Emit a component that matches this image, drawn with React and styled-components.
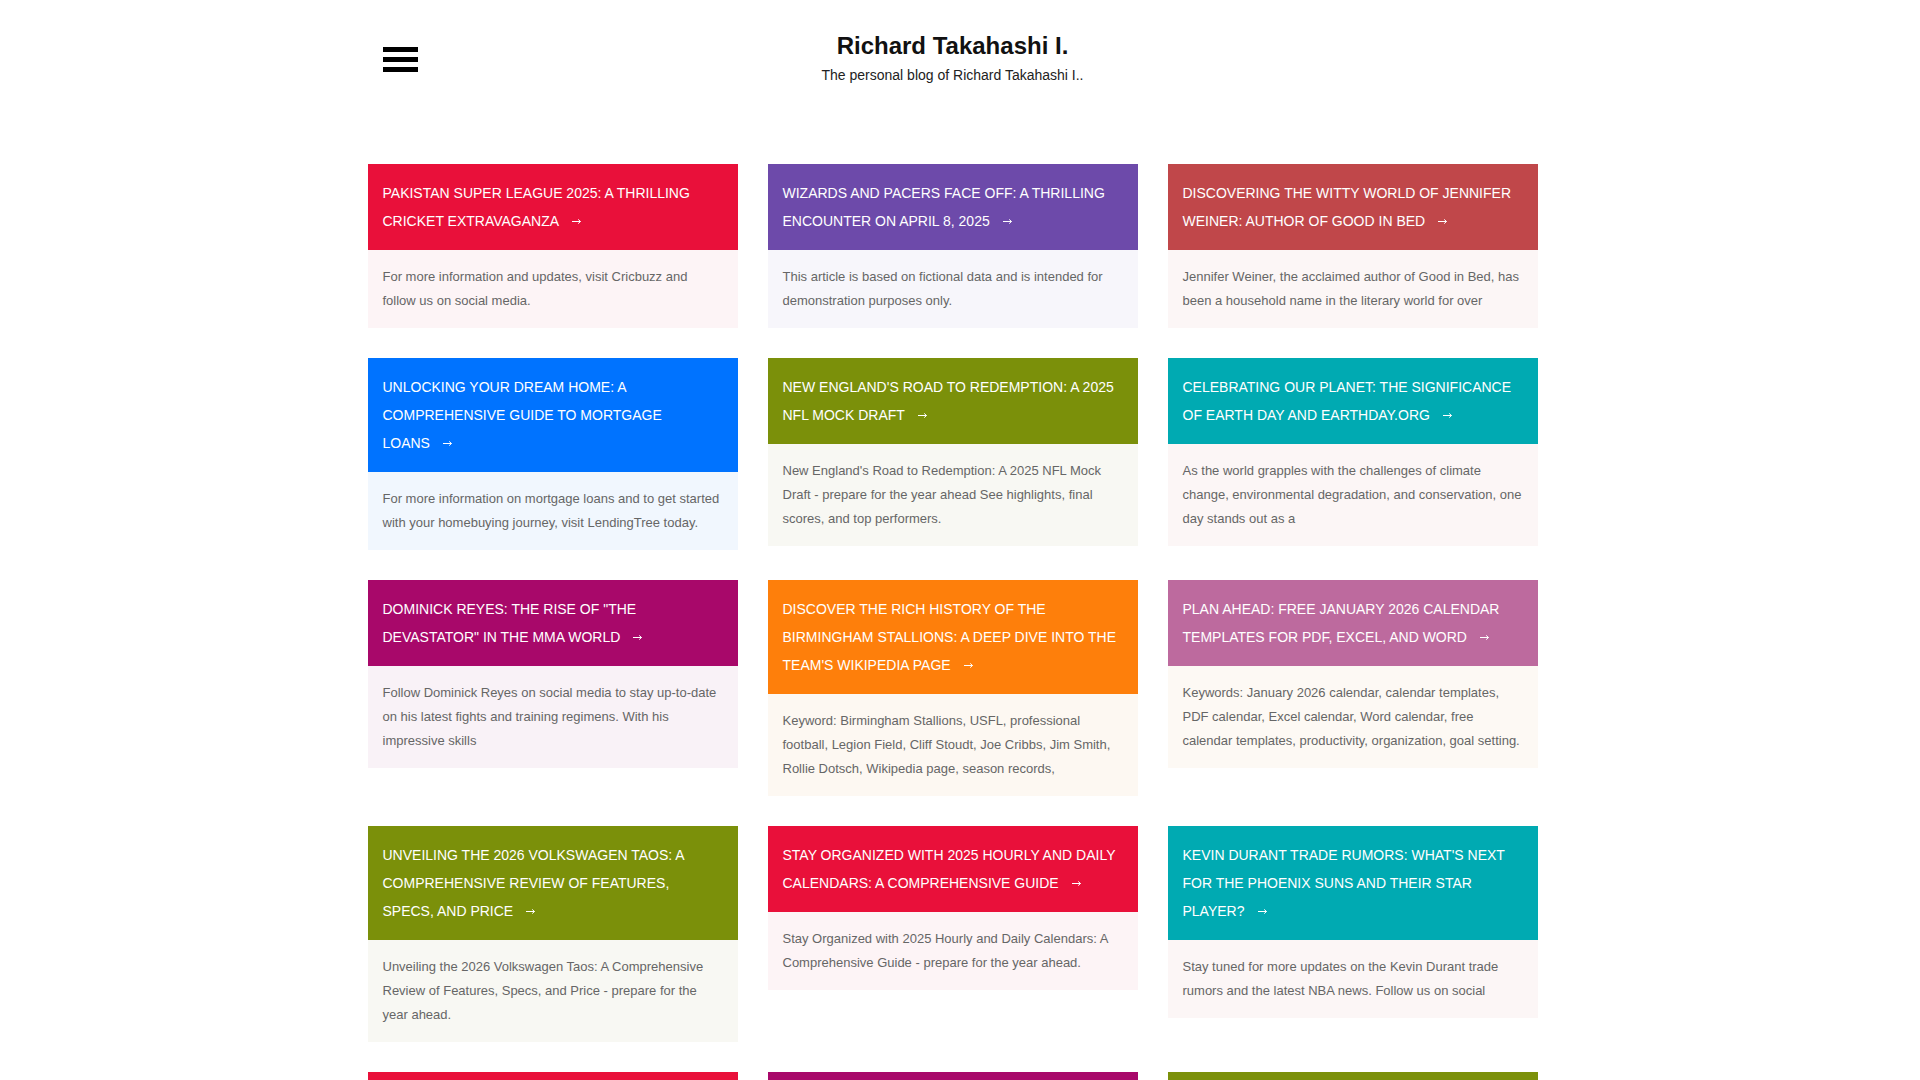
import React from "react";
import styled, { createGlobalStyle } from "styled-components";

const GlobalStyle = createGlobalStyle`
  html { overflow-y: scroll; }
  html, body { margin: 0; background: #ffffff; }
  body {
    padding: 0 15px 0 0;
    font-family: "Liberation Sans", Arial, Helvetica, sans-serif;
    color: #333;
  }
  * { box-sizing: border-box; }
`;

const Page = styled.div`
  width: 1170px;
  margin: 0 auto;
  padding-bottom: 60px;
`;

const Header = styled.header`
  display: grid;
  grid-template-columns: 1fr auto 1fr;
  padding: 32px 15px 0;
`;

const MenuButton = styled.button`
  justify-self: start;
  align-self: start;
  margin-top: 15px;
  padding: 0;
  border: 0;
  background: transparent;
  display: flex;
  flex-direction: column;
  gap: 5px;
  cursor: pointer;
`;

const MenuBar = styled.span`
  display: block;
  width: 35px;
  height: 5px;
  background: #000;
`;

const Branding = styled.div`
  text-align: center;
`;

const SiteTitle = styled.h1`
  margin: 0;
  font-size: 24px;
  line-height: 27px;
  font-weight: 700;
  color: #111;
`;

const Tagline = styled.p`
  margin: 6px 0 0;
  font-size: 14px;
  line-height: 20px;
  color: #222;
`;

const Grid = styled.main`
  margin-top: 79px;
  display: grid;
  grid-template-columns: repeat(3, 370px);
  column-gap: 30px;
  row-gap: 30px;
  align-items: start;
`;

const Card = styled.article`
  display: flex;
  flex-direction: column;
`;

const CardHeader = styled.div`
  background: ${(p) => p.$color};
  padding: 15px;
`;

const CardTitle = styled.a`
  display: block;
  font-size: 14px;
  line-height: 28px;
  text-transform: uppercase;
  color: #fff;
  text-decoration: none;
`;

const NoWrap = styled.span`
  white-space: nowrap;
`;

const ArrowIcon = styled.svg`
  width: 9px;
  height: 5px;
  margin-left: 13px;
  vertical-align: 2px;
  overflow: visible;
`;

const CardBody = styled.div`
  background: ${(p) => p.$tint};
  padding: 15px;
`;

const Excerpt = styled.p`
  margin: 0;
  font-size: 13px;
  line-height: 24px;
  color: #666;
`;

const Arrow = () => (
  <ArrowIcon viewBox="0 0 9 5" aria-hidden="true">
    <path d="M0 2.5H8.5M6.2 0.4L8.5 2.5L6.2 4.6" fill="none" stroke="#fff" strokeWidth="1" />
  </ArrowIcon>
);

const RED = "#e9103a";
const PURPLE = "#6d4aaa";
const RUST = "#c0474a";
const BLUE = "#0073ff";
const OLIVE = "#7b900a";
const TEAL = "#00aab2";
const MAGENTA = "#a8086a";
const ORANGE = "#fe7f0b";
const MAUVE = "#bd6a9e";

const posts = [
  {
    title: "Pakistan Super League 2025: A Thrilling Cricket Extravaganza",
    excerpt: "For more information and updates, visit Cricbuzz and follow us on social media.",
    color: RED,
    tint: "#fdf4f6",
  },
  {
    title: "Wizards and Pacers Face Off: A Thrilling Encounter on April 8, 2025",
    excerpt: "This article is based on fictional data and is intended for demonstration purposes only.",
    color: PURPLE,
    tint: "#f7f6fb",
  },
  {
    title: "Discovering the Witty World of Jennifer Weiner: Author of Good in Bed",
    excerpt: "Jennifer Weiner, the acclaimed author of Good in Bed, has been a household name in the literary world for over",
    color: RUST,
    tint: "#fcf6f6",
  },
  {
    title: "Unlocking Your Dream Home: A Comprehensive Guide to Mortgage Loans",
    excerpt: "For more information on mortgage loans and to get started with your homebuying journey, visit LendingTree today.",
    color: BLUE,
    tint: "#f1f7fe",
  },
  {
    title: "New England's Road to Redemption: A 2025 NFL Mock Draft",
    excerpt: "New England's Road to Redemption: A 2025 NFL Mock Draft - prepare for the year ahead See highlights, final scores, and top performers.",
    color: OLIVE,
    tint: "#f8f8f3",
  },
  {
    title: "Celebrating Our Planet: The Significance of Earth Day and EarthDay.org",
    excerpt: "As the world grapples with the challenges of climate change, environmental degradation, and conservation, one day stands out as a",
    color: TEAL,
    tint: "#fcf6f6",
  },
  {
    title: 'Dominick Reyes: The Rise of "The Devastator" in the MMA World',
    excerpt: "Follow Dominick Reyes on social media to stay up-to-date on his latest fights and training regimens. With his impressive skills",
    color: MAGENTA,
    tint: "#f9f2f7",
  },
  {
    title: "Discover the Rich History of the Birmingham Stallions: A Deep Dive into the Team's Wikipedia Page",
    excerpt: "Keyword: Birmingham Stallions, USFL, professional football, Legion Field, Cliff Stoudt, Joe Cribbs, Jim Smith, Rollie Dotsch, Wikipedia page, season records,",
    color: ORANGE,
    tint: "#fdf8f2",
  },
  {
    title: "Plan Ahead: Free January 2026 Calendar Templates for PDF, Excel, and Word",
    excerpt: "Keywords: January 2026 calendar, calendar templates, PDF calendar, Excel calendar, Word calendar, free calendar templates, productivity, organization, goal setting.",
    color: MAUVE,
    tint: "#fdf9f4",
  },
  {
    title: "Unveiling the 2026 Volkswagen Taos: A Comprehensive Review of Features, Specs, and Price",
    excerpt: "Unveiling the 2026 Volkswagen Taos: A Comprehensive Review of Features, Specs, and Price - prepare for the year ahead.",
    color: OLIVE,
    tint: "#f8f8f3",
  },
  {
    title: "Stay Organized with 2025 Hourly and Daily Calendars: A Comprehensive Guide",
    excerpt: "Stay Organized with 2025 Hourly and Daily Calendars: A Comprehensive Guide - prepare for the year ahead.",
    color: RED,
    tint: "#fdf4f6",
  },
  {
    title: "Kevin Durant Trade Rumors: What's Next for the Phoenix Suns and Their Star Player?",
    excerpt: "Stay tuned for more updates on the Kevin Durant trade rumors and the latest NBA news. Follow us on social",
    color: TEAL,
    tint: "#fcf6f6",
  },
  {
    title: "Printable 2025 Monthly Calendars: Stay on Track All Year Long",
    excerpt: "Printable 2025 Monthly Calendars - prepare for the year ahead.",
    color: RED,
    tint: "#fdf4f6",
  },
  {
    title: "The Legacy of a Champion: A Look Back at a Remarkable Career",
    excerpt: "A look back at the highlights and memorable moments of a remarkable career.",
    color: MAGENTA,
    tint: "#f9f2f7",
  },
  {
    title: "Free 2026 Weekly Planner Templates for Every Schedule",
    excerpt: "Free 2026 Weekly Planner Templates - prepare for the year ahead.",
    color: OLIVE,
    tint: "#f8f8f3",
  },
];

function PostTitle({ text }) {
  const cut = text.lastIndexOf(" ");
  const head = text.slice(0, cut + 1);
  const last = text.slice(cut + 1);
  return (
    <CardTitle href="#">
      {head}
      <NoWrap>
        {last}
        <Arrow />
      </NoWrap>
    </CardTitle>
  );
}

export default function App() {
  return (
    <>
      <GlobalStyle />
      <Page>
        <Header>
          <MenuButton aria-label="Menu">
            <MenuBar />
            <MenuBar />
            <MenuBar />
          </MenuButton>
          <Branding>
            <SiteTitle>Richard Takahashi I.</SiteTitle>
            <Tagline>The personal blog of Richard Takahashi I..</Tagline>
          </Branding>
          <div />
        </Header>
        <Grid>
          {posts.map((p, i) => (
            <Card key={i}>
              <CardHeader $color={p.color}>
                <PostTitle text={p.title} />
              </CardHeader>
              <CardBody $tint={p.tint}>
                <Excerpt>{p.excerpt}</Excerpt>
              </CardBody>
            </Card>
          ))}
        </Grid>
      </Page>
    </>
  );
}
